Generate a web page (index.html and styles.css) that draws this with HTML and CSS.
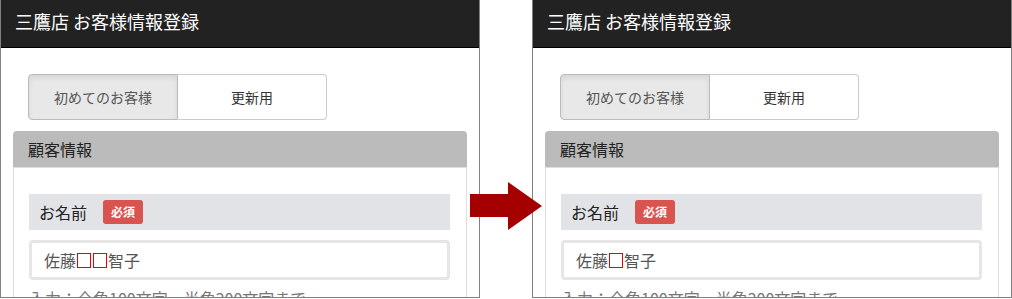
FILE: index.html
```html
<!DOCTYPE html>
<html lang="ja">
<head>
    <meta charset="UTF-8">
    <meta name="viewport" content="width=device-width, initial-scale=1.0">
    <title>お客様情報登録 比較</title>
    <link rel="stylesheet" href="styles.css">
</head>
<body>
    <div class="compare">
        <!-- before -->
        <div class="panel">
            <div class="panel-header">三鷹店 お客様情報登録</div>
            <div class="toggle">
                <span class="toggle-btn active">初めてのお客様</span>
                <span class="toggle-btn">更新用</span>
            </div>
            <div class="section">
                <div class="section-title">顧客情報</div>
                <div class="section-body">
                    <div class="field-label">お名前<span class="badge">必須</span></div>
                    <div class="text-input">佐藤<span class="tofu"></span><span class="tofu"></span>智子</div>
                    <div class="help">入力：全角100文字、半角200文字まで</div>
                </div>
            </div>
        </div>

        <!-- after -->
        <div class="panel">
            <div class="panel-header">三鷹店 お客様情報登録</div>
            <div class="toggle">
                <span class="toggle-btn active">初めてのお客様</span>
                <span class="toggle-btn">更新用</span>
            </div>
            <div class="section">
                <div class="section-title">顧客情報</div>
                <div class="section-body">
                    <div class="field-label">お名前<span class="badge">必須</span></div>
                    <div class="text-input">佐藤<span class="tofu"></span>智子</div>
                    <div class="help">入力：全角100文字、半角200文字まで</div>
                </div>
            </div>
        </div>

        <svg class="arrow" width="72" height="48" viewBox="0 0 72 48">
            <polygon points="0,12 38,12 38,0 72,24 38,48 38,35 0,35" fill="#a50000"/>
        </svg>
    </div>
</body>
</html>
```

FILE: styles.css
```css
body {
    margin: 0;
    background: #fff;
    font-family: "Noto Sans CJK JP", "Noto Sans", sans-serif;
}

.compare {
    position: relative;
    display: flex;
    gap: 52px;
    height: 299px;
    overflow: hidden;
}

.panel {
    width: 480px;
    height: 298px;
    box-sizing: border-box;
    border: 1px solid #808080;
    border-top: none;
    overflow: hidden;
}

.panel-header {
    height: 48px;
    box-sizing: border-box;
    padding: 8px 14px 0;
    background: #222;
    border-bottom: 1px solid #000;
    color: #fff;
    font-size: 18px;
    line-height: 26px;
}

.toggle {
    display: flex;
    width: 299px;
    margin: 26px 0 11px 27px;
}

.toggle-btn {
    flex: 1;
    height: 46px;
    box-sizing: border-box;
    border: 1px solid #ccc;
    background: #fff;
    color: #333;
    font-size: 14px;
    line-height: 44px;
    text-align: center;
}

.toggle-btn:first-child {
    border-radius: 4px 0 0 4px;
}

.toggle-btn:last-child {
    border-left: none;
    border-radius: 0 4px 4px 0;
}

.toggle-btn.active {
    background: #e8e8e8;
    border-color: #bbb;
    color: #555;
    box-shadow: inset 0 3px 5px rgba(0, 0, 0, 0.08);
}

.section {
    margin: 0 12px;
}

.section-title {
    height: 37px;
    box-sizing: border-box;
    padding-left: 15px;
    background: #bbb;
    border-radius: 4px 4px 0 0;
    border-bottom: 1px solid #ddd;
    color: #222;
    font-size: 16px;
    line-height: 37px;
}

.section-body {
    border: 1px solid #ddd;
    border-top: none;
    padding: 26px 16px 0 15px;
}

.field-label {
    display: flex;
    align-items: center;
    height: 36px;
    padding-left: 10px;
    background: #e2e3e7;
    color: #222;
    font-size: 16px;
}

.badge {
    margin-left: 16px;
    padding: 0 8px;
    height: 24px;
    border-radius: 3px;
    background: #d9534f;
    color: #fff;
    font-size: 12px;
    font-weight: bold;
    line-height: 24px;
}

.text-input {
    display: flex;
    align-items: center;
    height: 40px;
    box-sizing: border-box;
    margin-top: 10px;
    padding-left: 12px;
    border: 3px solid #e6e6e6;
    border-radius: 4px;
    color: #555;
    font-size: 16px;
}

.tofu {
    display: inline-block;
    width: 12px;
    height: 13px;
    margin: 1px 1px 0;
    border: 1px solid #e00;
}

.help {
    margin-top: 6px;
    color: #777;
    font-size: 16px;
}

.arrow {
    position: absolute;
    left: 470px;
    top: 182px;
}
```
